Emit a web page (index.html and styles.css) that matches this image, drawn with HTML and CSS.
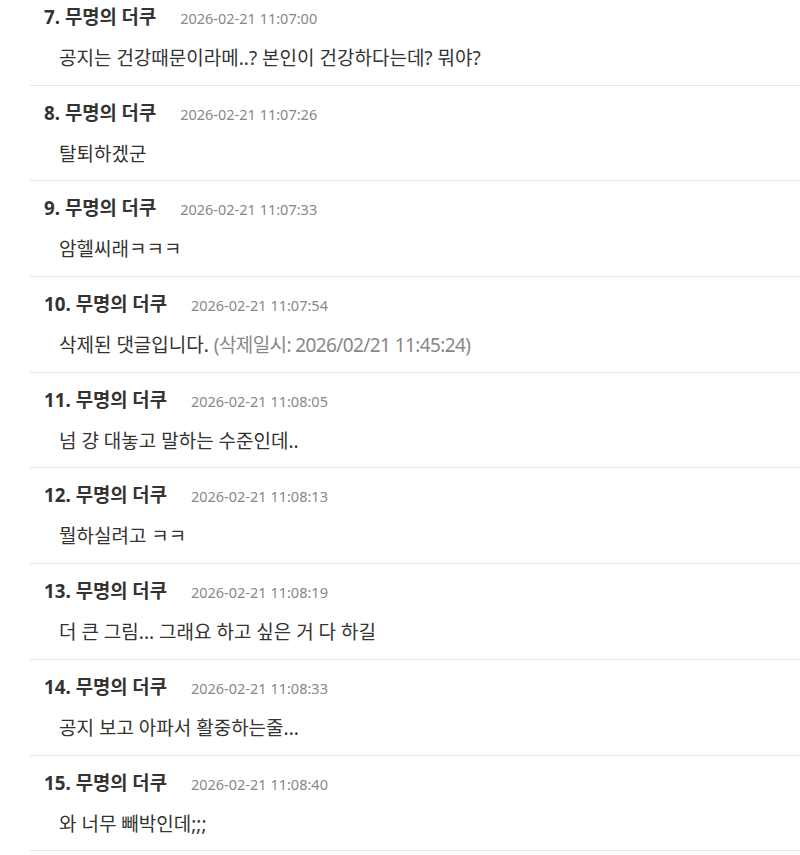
FILE: index.html
```html
<!DOCTYPE html>
<html lang="ko">
<head>
<meta charset="utf-8">
<link rel="stylesheet" href="styles.css">
</head>
<body>
<ul class="comments">
  <li class="comment">
    <div class="head"><span class="name">7. 무명의 더쿠</span><span class="date">2026-02-21 11:07:00</span></div>
    <div class="body">공지는 건강때문이라메..? 본인이 건강하다는데? 뭐야?</div>
  </li>
  <li class="comment">
    <div class="head"><span class="name">8. 무명의 더쿠</span><span class="date">2026-02-21 11:07:26</span></div>
    <div class="body">탈퇴하겠군</div>
  </li>
  <li class="comment">
    <div class="head"><span class="name">9. 무명의 더쿠</span><span class="date">2026-02-21 11:07:33</span></div>
    <div class="body">암헬씨래ㅋㅋㅋ</div>
  </li>
  <li class="comment">
    <div class="head"><span class="name">10. 무명의 더쿠</span><span class="date">2026-02-21 11:07:54</span></div>
    <div class="body">삭제된 댓글입니다. <span class="deleted">(삭제일시: 2026/02/21 11:45:24)</span></div>
  </li>
  <li class="comment">
    <div class="head"><span class="name">11. 무명의 더쿠</span><span class="date">2026-02-21 11:08:05</span></div>
    <div class="body">넘 걍 대놓고 말하는 수준인데..</div>
  </li>
  <li class="comment">
    <div class="head"><span class="name">12. 무명의 더쿠</span><span class="date">2026-02-21 11:08:13</span></div>
    <div class="body">뭘하실려고 ㅋㅋ</div>
  </li>
  <li class="comment">
    <div class="head"><span class="name">13. 무명의 더쿠</span><span class="date">2026-02-21 11:08:19</span></div>
    <div class="body">더 큰 그림... 그래요 하고 싶은 거 다 하길</div>
  </li>
  <li class="comment">
    <div class="head"><span class="name">14. 무명의 더쿠</span><span class="date">2026-02-21 11:08:33</span></div>
    <div class="body">공지 보고 아파서 활중하는줄...</div>
  </li>
  <li class="comment">
    <div class="head"><span class="name">15. 무명의 더쿠</span><span class="date">2026-02-21 11:08:40</span></div>
    <div class="body">와 너무 빼박인데;;;</div>
  </li>
</ul>
</body>
</html>
```
FILE: styles.css
```css
html, body {
  margin: 0;
  padding: 0;
  background: #fff;
}
body {
  font-family: "Noto Sans", "Noto Sans CJK KR", sans-serif;
  color: #333;
  overflow: hidden;
}
.comments {
  list-style: none;
  margin: -10px 0 0 30px;
  padding: 0;
}
.comment {
  padding: 14px 0 13px 14px;
  border-bottom: 1px solid #e6e6e6;
}
.head {
  display: flex;
  align-items: center;
  gap: 24px;
  height: 26px;
}
.name {
  font-size: 18.8px;
  line-height: 26px;
  font-weight: 700;
  color: #333;
}
.date {
  font-size: 14.5px;
  line-height: 26px;
  color: #888;
  padding-top: 2px;
}
.body {
  margin-top: 16px;
  padding-left: 15px;
  font-size: 19px;
  line-height: 25.7px;
  height: 25.7px;
  color: #333;
}
.deleted {
  color: #888;
  letter-spacing: -0.6px;
}
```
